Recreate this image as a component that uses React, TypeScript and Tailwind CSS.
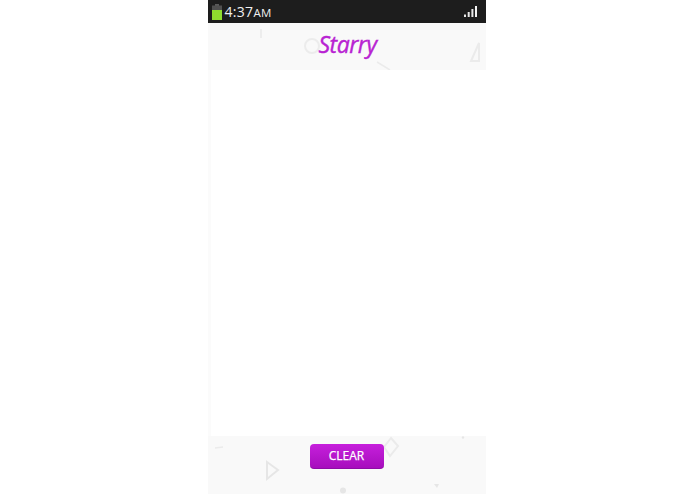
function BatteryIcon() {
  return (
    <svg width="10" height="16" viewBox="0 0 10 16" className="mt-[1px]">
      <rect x="3" y="0" width="4" height="2" fill="#5a5a5a" />
      <rect x="0" y="1.5" width="10" height="5" fill="#505050" />
      <rect x="0" y="6" width="10" height="10" fill="#8fdc2e" />
    </svg>
  );
}

function SignalIcon() {
  return (
    <svg width="13" height="11" viewBox="0 0 13 11">
      <rect x="0" y="8.5" width="2" height="2.5" fill="#e8e8e8" />
      <rect x="3.7" y="6" width="2" height="5" fill="#e8e8e8" />
      <rect x="7.4" y="3" width="2" height="8" fill="#e8e8e8" />
      <rect x="11" y="0" width="2" height="11" fill="#f4f4f4" />
    </svg>
  );
}

function HeaderShapes() {
  return (
    <svg width="278" height="47" viewBox="0 0 278 47" fill="none" className="absolute left-0 top-0">
      <line x1="53" y1="6" x2="53" y2="15" stroke="#e8e8e8" strokeWidth="1.5" />
      <circle cx="104" cy="23" r="7" stroke="#ececec" strokeWidth="2" />
      <line x1="169" y1="39" x2="182" y2="47" stroke="#ebebeb" strokeWidth="1.5" />
      <path d="M271 20 L271 38 L263 38 Z" stroke="#ebebeb" strokeWidth="2" />
    </svg>
  );
}

function FooterShapes() {
  return (
    <svg width="278" height="58" viewBox="0 0 278 58" fill="none" className="absolute left-0 top-0">
      <line x1="7" y1="12" x2="15" y2="11" stroke="#ebebeb" strokeWidth="1.5" />
      <path d="M59 26 L70 34 L59 43 Z" stroke="#e6e6e6" strokeWidth="2" />
      <circle cx="135" cy="54.5" r="3" fill="#e6e6e6" />
      <path d="M183 2 L190 10 L182 20 L176 11 Z" stroke="#ebebeb" strokeWidth="2" />
      <circle cx="255" cy="1.5" r="1.2" fill="#e6e6e6" />
      <path d="M226 48 L231 48 L229 52 Z" fill="#e6e6e6" />
    </svg>
  );
}

export default function App() {
  return (
    <div className="flex h-[494px] w-[695px] justify-center overflow-hidden bg-white pr-[2px] font-['Open_Sans',sans-serif]">
      <div className="flex w-[278px] flex-col">
        <div className="flex h-[23px] items-center justify-between bg-[#1d1d1d] pl-[4px] pr-[9px]">
          <div className="flex items-center gap-[3px]">
            <BatteryIcon />
            <span className="text-[14px] leading-none tracking-[0.3px] text-[#f0f0f0]">
              4:37<span className="text-[11.5px]">AM</span>
            </span>
          </div>
          <SignalIcon />
        </div>
        <div className="relative flex h-[47px] items-start justify-center bg-[#f9f9f9] pl-[2px] pt-[10px]">
          <HeaderShapes />
          <span className="relative text-[23px] font-medium italic leading-none tracking-[-0.5px] text-[#b822d2] [-webkit-text-stroke:0.4px_#b822d2]">
            Starry
          </span>
        </div>
        <div className="flex flex-1 bg-[#fbfbfb] pl-[3px]">
          <div className="flex-1 bg-white" />
        </div>
        <div className="relative flex h-[58px] justify-center bg-[#f9f9f9] pt-[8px]">
          <FooterShapes />
          <button className="relative h-[25px] w-[74px] rounded-[4px] border-b border-[#8f0ba6] bg-gradient-to-b from-[#c61fdc] to-[#a70dbd] text-[12px] font-medium leading-none text-white [-webkit-text-stroke:0.25px_#ffffff]">
            CLEAR
          </button>
        </div>
      </div>
    </div>
  );
}
